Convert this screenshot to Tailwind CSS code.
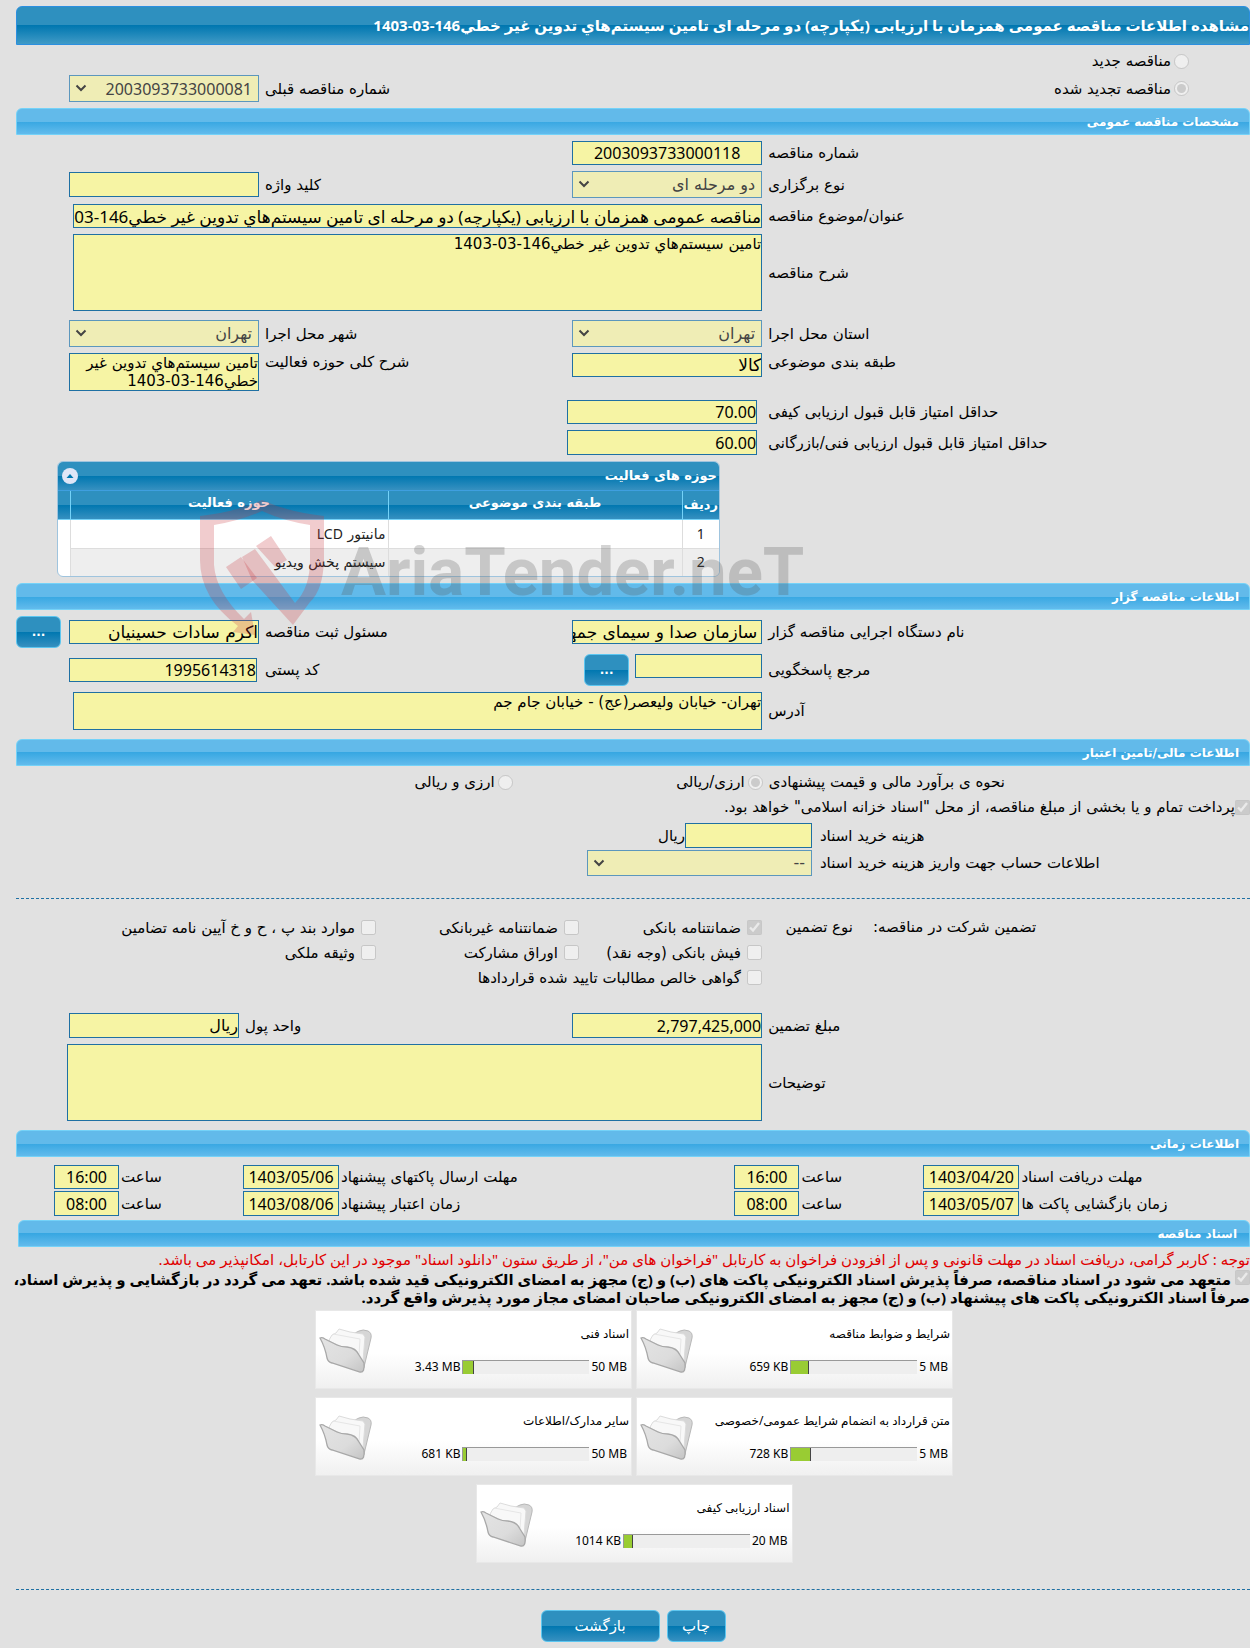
<!DOCTYPE html>
<html lang="fa" dir="rtl">
<head>
  <meta charset="UTF-8" />
  <meta name="viewport" content="width=device-width, initial-scale=1.0"/>
  <title>مشاهده اطلاعات مناقصه عمومی</title>
  <script src="https://cdn.jsdelivr.net/npm/@tailwindcss/browser@4"></script>
</head>
<body class="bg-[#e1e1e1] min-h-screen overflow-x-hidden text-black text-[15px] leading-[18px] font-['DejaVu_Sans',sans-serif]">
  <main class="relative pl-4 pt-1.5 pb-1.5">

    <h1 class="h-[39px] flex items-center pb-0.5 overflow-hidden whitespace-nowrap rounded-t-md border border-[#2b8fe0] bg-[linear-gradient(#2e90bf_0%,#2e90bf_50%,#0077b0_50%,#409ac6_100%)] text-white font-bold font-['Noto_Sans','DejaVu_Sans',sans-serif]">مشاهده اطلاعات مناقصه عمومی همزمان با ارزیابی (یکپارچه) دو مرحله ای تامین سیستم‌هاي تدوین غیر خطي146-03-1403</h1>

    <!-- tender kind -->
    <div class="pr-[61px] pt-1 pb-1.5">
      <label class="flex items-center gap-[3px] h-6 mb-0.5 w-fit"><input type="radio" name="kind" disabled class="size-[15px]"/>مناقصه جدید</label>
      <div class="flex items-center justify-between h-[27px] pl-[53px]">
        <label class="flex items-center gap-[3px]"><input type="radio" name="kind" checked disabled class="size-[15px]"/>مناقصه تجدید شده</label>
        <div class="flex items-center gap-1.5 basis-[440px]">
          <label for="prev" class="flex-1 text-left">شماره مناقصه قبلی</label>
          <div class="relative w-[190px]">
            <select id="prev" disabled class="appearance-none w-full h-[27px] pr-1.5 border border-[#5c97bd] bg-[#efedb5] text-[#444] text-[16px] font-['Noto_Sans','DejaVu_Sans',sans-serif]"><option>2003093733000081</option></select>
            <svg class="absolute left-1.5 top-[9px] w-3 h-2 pointer-events-none" viewBox="0 0 12 8"><path d="M1.5 1.5 6 6l4.5-4.5" fill="none" stroke="#444" stroke-width="2"/></svg>
          </div>
        </div>
      </div>
    </div>

    <h2 class="h-[27px] flex items-center pr-2.5 rounded-t-md border border-[#74d2f8] bg-[linear-gradient(#62baea_0%,#62baea_50%,#37a7e2_50%,#62bbec_100%)] text-white text-[12px] font-bold">مشخصات مناقصه عمومی</h2>

    <!-- general details -->
    <section class="pl-[53px] py-1.5 flex flex-col gap-1.5">
      <div class="grid grid-cols-[minmax(0,8fr)_190px_minmax(0,5fr)_190px] gap-x-1.5 items-center">
        <label for="no" class="text-left">شماره مناقصه</label>
        <input id="no" readonly value="2003093733000118" class="w-full h-6 border border-[#1f70a3] bg-[#f6f4a4] text-[16px] text-center font-['Noto_Sans','DejaVu_Sans',sans-serif]"/>
      </div>
      <div class="grid grid-cols-[minmax(0,8fr)_190px_minmax(0,5fr)_190px] gap-x-1.5 items-center">
        <label for="type" class="text-left">نوع برگزاری</label>
        <div class="relative">
          <select id="type" disabled class="appearance-none w-full h-[27px] pr-1.5 border border-[#5c97bd] bg-[#efedb5] text-[#444] text-[16px]"><option>دو مرحله ای</option></select>
          <svg class="absolute left-1.5 top-[9px] w-3 h-2 pointer-events-none" viewBox="0 0 12 8"><path d="M1.5 1.5 6 6l4.5-4.5" fill="none" stroke="#444" stroke-width="2"/></svg>
        </div>
        <label for="keyword" class="text-left">کلید واژه</label>
        <input id="keyword" readonly class="w-full h-[25px] border border-[#1f70a3] bg-[#f6f4a4] text-[17px]"/>
      </div>
      <div class="grid grid-cols-[minmax(0,8fr)_190px_minmax(0,5fr)_190px] gap-x-1.5 items-center">
        <label for="subject" class="text-left">عنوان/موضوع مناقصه</label>
        <div class="col-span-3 pl-1"><input id="subject" readonly value="مناقصه عمومی همزمان با ارزیابی (یکپارچه) دو مرحله ای تامین سیستم‌هاي تدوین غیر خطي146-03-1403" class="block w-full h-6 border border-[#1f70a3] bg-[#f6f4a4] text-[17px] font-['Noto_Sans','DejaVu_Sans',sans-serif]"/></div>
      </div>
      <div class="grid grid-cols-[minmax(0,8fr)_190px_minmax(0,5fr)_190px] gap-x-1.5 items-center">
        <label for="desc" class="text-left">شرح مناقصه</label>
        <div class="col-span-3 pl-1"><textarea id="desc" readonly class="block w-full h-[77px] resize-none border border-[#1f70a3] bg-[#f6f4a4]">تامین سیستم‌هاي تدوین غیر خطي146-03-1403</textarea></div>
      </div>
      <div class="mt-[3px] grid grid-cols-[minmax(0,8fr)_190px_minmax(0,5fr)_190px] gap-x-1.5 items-center">
        <label for="province" class="text-left">استان محل اجرا</label>
        <div class="relative">
          <select id="province" disabled class="appearance-none w-full h-[27px] pr-1.5 border border-[#5c97bd] bg-[#efedb5] text-[#444] text-[16px]"><option>تهران</option></select>
          <svg class="absolute left-1.5 top-[9px] w-3 h-2 pointer-events-none" viewBox="0 0 12 8"><path d="M1.5 1.5 6 6l4.5-4.5" fill="none" stroke="#444" stroke-width="2"/></svg>
        </div>
        <label for="city" class="text-left">شهر محل اجرا</label>
        <div class="relative">
          <select id="city" disabled class="appearance-none w-full h-[27px] pr-1.5 border border-[#5c97bd] bg-[#efedb5] text-[#444] text-[16px]"><option>تهران</option></select>
          <svg class="absolute left-1.5 top-[9px] w-3 h-2 pointer-events-none" viewBox="0 0 12 8"><path d="M1.5 1.5 6 6l4.5-4.5" fill="none" stroke="#444" stroke-width="2"/></svg>
        </div>
      </div>
      <div class="grid grid-cols-[minmax(0,8fr)_190px_minmax(0,5fr)_190px] gap-x-1.5 items-start">
        <label for="class" class="text-left">طبقه بندی موضوعی</label>
        <input id="class" readonly value="کالا" class="w-full h-6 border border-[#1f70a3] bg-[#f6f4a4] text-[17px]"/>
        <label for="scope" class="text-left">شرح کلی حوزه فعالیت</label>
        <textarea id="scope" readonly class="block w-full h-[38px] resize-none overflow-hidden border border-[#1f70a3] bg-[#f6f4a4]">تامین سیستم‌هاي تدوین غیر خطي146-03-1403</textarea>
      </div>
      <div class="mt-[3px] grid grid-cols-[minmax(0,8fr)_190px_minmax(0,5fr)_190px] gap-x-1.5 items-center">
        <label for="quality" class="text-left">حداقل امتیاز قابل قبول ارزیابی کیفی</label>
        <input id="quality" readonly value="70.00" class="mr-[5px] w-full h-6 border border-[#1f70a3] bg-[#f6f4a4] text-[16px] font-['Noto_Sans','DejaVu_Sans',sans-serif]"/>
      </div>
      <div class="grid grid-cols-[minmax(0,8fr)_190px_minmax(0,5fr)_190px] gap-x-1.5 items-center">
        <label for="technical" class="text-left">حداقل امتیاز قابل قبول ارزیابی فنی/بازرگانی</label>
        <input id="technical" readonly value="60.00" class="mr-[5px] w-full h-[25px] border border-[#1f70a3] bg-[#f6f4a4] text-[16px] font-['Noto_Sans','DejaVu_Sans',sans-serif]"/>
      </div>
    </section>

    <div class="ml-[41px] mb-1.5 w-[663px] mr-auto rounded-md overflow-hidden border border-[#9fc4de] bg-white">
      <div class="h-[29px] flex items-center justify-between pr-0.5 pl-1 border-b border-[#3f9fe0] bg-[linear-gradient(#2e90bf_0%,#2e90bf_50%,#0077b0_50%,#3690c0_100%)] text-white text-[13px] font-bold">
        <span>حوزه های فعالیت</span>
        <button type="button" aria-label="جمع کردن" class="size-4 rounded-full bg-[#dfe6f7] flex items-center justify-center"><svg class="size-2" viewBox="0 0 8 8"><path d="M4 2 7.5 6h-7z" fill="#0077b0"/></svg></button>
      </div>
      <table class="w-full table-fixed border-collapse">
        <thead class="text-[13px]">
          <tr class="h-[28px] bg-[linear-gradient(#2e90bf_0%,#2e90bf_50%,#0077b0_50%,#3690c0_100%)] text-white">
            <th class="w-[37px] border-l border-[#74d2f8]">ردیف</th>
            <th class="w-[294px] pb-1 border-l border-[#74d2f8]">طبقه بندی موضوعی</th>
            <th class="pb-1 border-l border-[#74d2f8]">حوزه فعالیت</th>
            <th class="w-3"></th>
          </tr>
        </thead>
        <tbody class="text-[#222] text-[14px]">
          <tr class="h-[29px] border-t border-[#74d2f8]">
            <td class="text-center border-l border-[#ddd] font-['Noto_Sans',sans-serif]">1</td><td class="border-l border-[#ddd]"></td><td class="pr-0.5 border-l border-[#ddd]">مانیتور <span class="font-['Noto_Sans',sans-serif]">LCD</span></td><td></td>
          </tr>
          <tr class="h-[28px]">
            <td class="bg-[#eee] text-center border-l border-t border-[#ddd] font-['Noto_Sans',sans-serif]">2</td><td class="bg-[#eee] border-l border-t border-[#ddd]"></td><td class="bg-[#eee] pr-0.5 border-l border-t border-[#ddd]">سیستم پخش ویدیو</td><td></td>
          </tr>
        </tbody>
      </table>
    </div>

    <h2 class="h-[27px] flex items-center pr-2.5 rounded-t-md border border-[#74d2f8] bg-[linear-gradient(#62baea_0%,#62baea_50%,#37a7e2_50%,#62bbec_100%)] text-white text-[12px] font-bold">اطلاعات مناقصه گزار</h2>

    <!-- tender holder -->
    <section class="pt-1.5 pb-[9px] flex flex-col gap-1.5">
      <div class="grid grid-cols-[minmax(0,8fr)_190px_minmax(0,5fr)_190px_47px] gap-x-1.5 items-center">
        <label for="org" class="text-left">نام دستگاه اجرایی مناقصه گزار</label>
        <input id="org" readonly value="سازمان صدا و سیمای جمهوری اسلامی ایران" class="w-full h-6 pr-1 border border-[#1f70a3] bg-[#f6f4a4] text-[17px]"/>
        <label for="clerk" class="text-left">مسئول ثبت مناقصه</label>
        <input id="clerk" readonly value="اکرم سادات حسینیان" class="w-full h-6 border border-[#1f70a3] bg-[#f6f4a4] text-[17px]"/>
        <button type="button" class="mr-0.5 h-8 rounded-md border border-[#5cc6f0] bg-[linear-gradient(#2e90bf_0%,#2e90bf_50%,#0077b0_50%,#3690c0_100%)] text-white text-[12px] font-bold">...</button>
      </div>
      <div class="grid grid-cols-[minmax(0,8fr)_190px_minmax(0,5fr)_190px_47px] gap-x-1.5 items-center">
        <label for="contact" class="text-left">مرجع پاسخگویی</label>
        <div class="flex items-start gap-1.5">
          <input id="contact" readonly class="w-[127px] h-6 border border-[#1f70a3] bg-[#f6f4a4] text-[17px]"/>
          <button type="button" class="w-[45px] h-8 rounded-md border border-[#5cc6f0] bg-[linear-gradient(#2e90bf_0%,#2e90bf_50%,#0077b0_50%,#3690c0_100%)] text-white text-[12px] font-bold">...</button>
        </div>
        <label for="zip" class="text-left">کد پستی</label>
        <div class="pr-0.5"><input id="zip" readonly value="1995614318" class="block w-full h-6 border border-[#1f70a3] bg-[#f6f4a4] text-[16px] font-['Noto_Sans','DejaVu_Sans',sans-serif]"/></div>
      </div>
      <div class="grid grid-cols-[minmax(0,8fr)_190px_minmax(0,5fr)_190px_47px] gap-x-1.5 items-center">
        <label for="address" class="text-left">آدرس</label>
        <div class="col-span-3 pl-1"><textarea id="address" readonly class="block w-full h-[38px] resize-none border border-[#1f70a3] bg-[#f6f4a4]">تهران- خیابان ولیعصر(عج) - خیابان جام جم</textarea></div>
      </div>
    </section>

    <h2 class="h-[27px] flex items-center pr-2.5 rounded-t-md border border-[#74d2f8] bg-[linear-gradient(#62baea_0%,#62baea_50%,#37a7e2_50%,#62bbec_100%)] text-white text-[12px] font-bold">اطلاعات مالی/تامین اعتبار</h2>

    <!-- finance -->
    <section class="pt-1">
      <div class="grid grid-cols-[39%_260px_1fr] gap-x-1.5 items-center h-6">
        <span class="text-left">نحوه ی برآورد مالی و قیمت پیشنهادی</span>
        <label class="flex items-center gap-[3px] w-fit"><input type="radio" name="currency" checked disabled class="size-[15px]"/>ارزی/ریالی</label>
        <label class="flex items-center gap-[3px] w-fit -mr-4"><input type="radio" name="currency" disabled class="size-[15px]"/>ارزی و ریالی</label>
      </div>
      <label class="flex items-center h-[26px] w-fit"><input type="checkbox" checked disabled class="size-[15px]"/>پرداخت تمام و یا بخشی از مبلغ مناقصه، از محل "اسناد خزانه اسلامی" خواهد بود.</label>
      <div class="grid grid-cols-[35.5%_127px_1fr] items-center mt-[3px]">
        <label for="fee" class="text-left pl-2">هزینه خرید اسناد</label>
        <input id="fee" readonly class="w-full h-[25px] border border-[#1f70a3] bg-[#f6f4a4] text-[17px]"/>
        <span>ریال</span>
      </div>
      <div class="grid grid-cols-[35.5%_225px] items-center mt-0.5">
        <label for="account" class="text-left pl-2">اطلاعات حساب جهت واریز هزینه خرید اسناد</label>
        <div class="relative">
          <select id="account" disabled class="appearance-none w-full h-[26px] pr-1.5 border border-[#5c97bd] bg-[#efedb5] text-[#444] text-[16px]"><option>--</option></select>
          <svg class="absolute left-1.5 top-[9px] w-3 h-2 pointer-events-none" viewBox="0 0 12 8"><path d="M1.5 1.5 6 6l4.5-4.5" fill="none" stroke="#444" stroke-width="2"/></svg>
        </div>
      </div>
    </section>

    <hr class="mt-[22px] mb-4 border-t border-dashed border-[#1f70a3]"/>

    <!-- guarantee -->
    <section class="flex">
      <h3 class="w-[377px] shrink-0 leading-[25px] text-left">تضمین شرکت در مناقصه:</h3>
      <span class="w-[111px] shrink-0 leading-[25px] pr-5">نوع تضمین</span>
      <div class="flex-1 grid grid-cols-[183px_203px_1fr] auto-rows-[25px] items-center whitespace-nowrap">
        <label class="flex items-center gap-1.5"><input type="checkbox" checked disabled class="size-[15px]"/>ضمانتنامه بانکی</label>
        <label class="flex items-center gap-1.5"><input type="checkbox" disabled class="size-[15px]"/>ضمانتنامه غیربانکی</label>
        <label class="flex items-center gap-1.5"><input type="checkbox" disabled class="size-[15px]"/>موارد بند پ ، ح و خ آیین نامه تضامین</label>
        <label class="flex items-center gap-1.5"><input type="checkbox" disabled class="size-[15px]"/>فیش بانکی (وجه نقد)</label>
        <label class="flex items-center gap-1.5"><input type="checkbox" disabled class="size-[15px]"/>اوراق مشارکت</label>
        <label class="flex items-center gap-1.5"><input type="checkbox" disabled class="size-[15px]"/>وثیقه ملکی</label>
        <label class="col-span-3 flex items-center gap-1.5"><input type="checkbox" disabled class="size-[15px]"/>گواهی خالص مطالبات تایید شده قراردادها</label>
      </div>
    </section>

    <section class="pt-[23px] pb-[9px] pl-[53px] flex flex-col gap-1.5">
      <div class="grid grid-cols-[minmax(0,8fr)_190px_minmax(0,5fr)_190px] gap-x-1.5 items-center">
        <label for="amount" class="text-left">مبلغ تضمین</label>
        <input id="amount" readonly value="2,797,425,000" class="w-full h-[25px] border border-[#1f70a3] bg-[#f6f4a4] text-[16px] font-['Noto_Sans','DejaVu_Sans',sans-serif]"/>
        <div class="col-span-2 flex items-center gap-1.5">
          <label for="unit" class="flex-1 text-left">واحد پول</label>
          <input id="unit" readonly value="ریال" class="w-[170px] h-[25px] border border-[#1f70a3] bg-[#f6f4a4] text-[16px]"/>
        </div>
      </div>
      <div class="grid grid-cols-[minmax(0,8fr)_190px_minmax(0,5fr)_190px] gap-x-1.5 items-center">
        <label for="notes" class="text-left">توضیحات</label>
        <div class="col-span-3 -ml-0.5"><textarea id="notes" readonly class="block w-full h-[77px] resize-none border border-[#1f70a3] bg-[#f6f4a4]"></textarea></div>
      </div>
    </section>

    <h2 class="h-[27px] flex items-center pr-2.5 rounded-t-md border border-[#74d2f8] bg-[linear-gradient(#62baea_0%,#62baea_50%,#37a7e2_50%,#62bbec_100%)] text-white text-[12px] font-bold">اطلاعات زمانی</h2>

    <!-- deadlines -->
    <section class="pl-[38px] pt-2 pb-1 grid grid-cols-[minmax(0,7fr)_96px_124px_65px_minmax(0,12fr)_96px_124px_65px] gap-y-0.5 items-center">
      <label for="d1" class="text-left pl-0.5">مهلت دریافت اسناد</label>
      <input id="d1" readonly value="1403/04/20" class="w-full h-6 border border-[#1f70a3] bg-[#f6f4a4] text-[16px] text-center font-['Noto_Sans','DejaVu_Sans',sans-serif]"/>
      <label for="t1" class="text-left pl-0.5">ساعت</label>
      <input id="t1" readonly value="16:00" class="w-full h-6 border border-[#1f70a3] bg-[#f6f4a4] text-[16px] text-center font-['Noto_Sans','DejaVu_Sans',sans-serif]"/>
      <label for="d2" class="text-left pl-0.5">مهلت ارسال پاکتهای پیشنهاد</label>
      <input id="d2" readonly value="1403/05/06" class="w-full h-6 border border-[#1f70a3] bg-[#f6f4a4] text-[16px] text-center font-['Noto_Sans','DejaVu_Sans',sans-serif]"/>
      <label for="t2" class="text-left pl-0.5">ساعت</label>
      <input id="t2" readonly value="16:00" class="w-full h-6 border border-[#1f70a3] bg-[#f6f4a4] text-[16px] text-center font-['Noto_Sans','DejaVu_Sans',sans-serif]"/>
      <label for="d3" class="text-left pl-0.5">زمان بازگشایی پاکت ها</label>
      <input id="d3" readonly value="1403/05/07" class="w-full h-[25px] border border-[#1f70a3] bg-[#f6f4a4] text-[16px] text-center font-['Noto_Sans','DejaVu_Sans',sans-serif]"/>
      <label for="t3" class="text-left pl-0.5">ساعت</label>
      <input id="t3" readonly value="08:00" class="w-full h-[25px] border border-[#1f70a3] bg-[#f6f4a4] text-[16px] text-center font-['Noto_Sans','DejaVu_Sans',sans-serif]"/>
      <label for="d4" class="text-left pl-0.5">زمان اعتبار پیشنهاد</label>
      <input id="d4" readonly value="1403/08/06" class="w-full h-[25px] border border-[#1f70a3] bg-[#f6f4a4] text-[16px] text-center font-['Noto_Sans','DejaVu_Sans',sans-serif]"/>
      <label for="t4" class="text-left pl-0.5">ساعت</label>
      <input id="t4" readonly value="08:00" class="w-full h-[25px] border border-[#1f70a3] bg-[#f6f4a4] text-[16px] text-center font-['Noto_Sans','DejaVu_Sans',sans-serif]"/>
    </section>

    <h2 class="ml-0.5 h-[27px] flex items-center pr-3 rounded-t-md border border-[#74d2f8] bg-[linear-gradient(#62baea_0%,#62baea_50%,#37a7e2_50%,#62bbec_100%)] text-white text-[12px] font-bold">اسناد مناقصه</h2>

    <!-- documents -->
    <section class="font-['Noto_Sans','DejaVu_Sans',sans-serif]">
      <p class="mt-[3px] text-[#e00000]">توجه : کاربر گرامی، دریافت اسناد در مهلت قانونی و پس از افزودن فراخوان به کارتابل "فراخوان های من"، از طریق ستون "دانلود اسناد" موجود در این کارتابل، امکانپذیر می باشد.</p>
      <label class="block mt-0.5 font-bold whitespace-nowrap"><input type="checkbox" checked disabled class="size-[15px] ml-1"/>متعهد می شود در اسناد مناقصه، صرفاً پذیرش اسناد الکترونیکی پاکت های (ب) و (ج) مجهز به امضای الکترونیکی قید شده باشد. تعهد می گردد در بازگشایی و پذیرش اسناد،<br/>صرفاً اسناد الکترونیکی پاکت های پیشنهاد (ب) و (ج) مجهز به امضای الکترونیکی صاحبان امضای مجاز مورد پذیرش واقع گردد.</label>
      <div id="docs" class="mt-1 mx-auto w-[640px] pl-0.5 flex flex-wrap justify-center gap-x-1 gap-y-2 text-[12px]"></div>
    </section>

    <hr class="mt-[26px] mb-5 border-t border-dashed border-[#1f70a3]"/>

    <div class="flex justify-center gap-[7px]">
      <button type="button" class="w-[59px] h-8 rounded-md border border-[#5cc6f0] bg-[linear-gradient(#2e90bf_0%,#2e90bf_50%,#0077b0_50%,#3690c0_100%)] text-white">چاپ</button>
      <button type="button" class="w-[119px] h-8 rounded-md border border-[#5cc6f0] bg-[linear-gradient(#2e90bf_0%,#2e90bf_50%,#0077b0_50%,#3690c0_100%)] text-white">بازگشت</button>
    </div>

    <!-- watermark -->
    <div dir="ltr" class="absolute left-[200px] top-[500px] flex pointer-events-none">
      <svg class="w-[125px] h-[136px]" viewBox="200 500 125 136" fill="#c8323c" fill-opacity=".25">
        <path d="M200 516Q236 512 262 500Q288 512 324 516V560Q323 590 310 602L293 625L252 580L242 557L255 549L295 603Q310 588 310 560V525Q284 521 262 511Q240 521 214 525V565Q216 592 244 619L251 612L255 635L233 632L238 626Q200 598 200 560Z"/>
        <path d="M226 567L241 557L257 578L241 589ZM256 546L271 536L287 560L275 567Z"/>
      </svg>
      <span class="ml-4 mt-9 text-[67px] leading-[72px] font-bold text-[#555]/25 font-['Roboto',sans-serif]">AriaTender.neT</span>
    </div>
  </main>

  <script>
    // fill = used part of the quota, in percent
    const docs = [
      { title: "شرایط و ضوابط مناقصه", used: "659 KB", max: "5 MB", fill: 14 },
      { title: "اسناد فنی", used: "3.43 MB", max: "50 MB", fill: 8 },
      { title: "متن قرارداد به انضمام شرایط عمومی/خصوصی", used: "728 KB", max: "5 MB", fill: 16 },
      { title: "سایر مدارک/اطلاعات", used: "681 KB", max: "50 MB", fill: 3 },
      { title: "اسناد ارزیابی کیفی", used: "1014 KB", max: "20 MB", fill: 7 },
    ];

    document.getElementById("docs").innerHTML = docs.map((d, i) => `
      <div class="relative w-[317px] h-[79px] pt-3.5 pr-0.5 border border-[#e8e8e8] bg-[linear-gradient(#fff_0%,#fff_55%,#f0f0f0_100%)]">
        <svg class="absolute left-[3px] top-4 w-[54px] h-[48px]" viewBox="0 0 54 48">
          <defs><linearGradient id="f${i}" x1="0" y1="0" x2="1" y2="1"><stop offset="0" stop-color="#e4e4e4"/><stop offset=".6" stop-color="#dcdcdc"/><stop offset="1" stop-color="#c4c4c4"/></linearGradient></defs>
          <path d="M32 8 40 4Q44 2 49 4Q53 6 52 11L45 40Q44 45 40 43L30 30Z" fill="#d6d6d6" stroke="#b8b8b8"/>
          <path d="M10 13 13 8 17 6 20 2 31 5 44 7 46 10 44 34 40 32 28 22 12 15Z" fill="#f8f8f8" stroke="#dcdcdc"/>
          <path d="M14 7 41 12 40 28" fill="none" stroke="#e6e6e6"/>
          <path d="M1 11Q3 10 6 12L18 18Q22 20 28 20Q37 21 40 28L45 36Q46 46 41 45L13 36Q9 35 8 31Q6 20 1 11Z" fill="url(#f${i})" stroke="#a8a8a8" stroke-width="1.3"/>
        </svg>
        <p class="leading-[18px]">${d.title}</p>
        <div dir="ltr" class="mt-4 flex items-center justify-end gap-0.5 pr-0.5 leading-4">
          <span>${d.used}</span>
          <div class="w-[127px] h-3.5 border-t border-l border-[#999] bg-[#eee]"><div class="h-full bg-[#9c3] border-r border-[#444]" style="width:${d.fill}%"></div></div>
          <span>${d.max}</span>
        </div>
      </div>`).join("");
  </script>
</body>
</html>
